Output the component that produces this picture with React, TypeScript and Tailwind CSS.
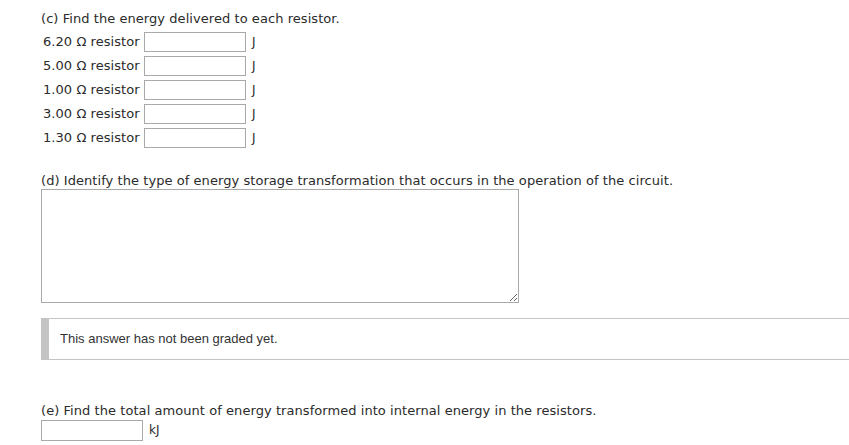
import React from "react";

const font = { fontFamily: '"DejaVu Sans", Verdana, sans-serif', letterSpacing: "0.06px" };

const rows = ["6.20", "5.00", "1.00", "3.00", "1.30"];

export default function App() {
  return (
    <div className="w-[849px] h-[445px] bg-white text-[#2b2b2b] text-[13px] overflow-hidden relative" style={font}>
      <div className="pl-[41px] pt-[9px]">
        <div className="h-[20px] leading-[20px]">(c) Find the energy delivered to each resistor.</div>
        <div className="flex flex-col pt-[1px]">
          {rows.map((r) => (
            <div key={r} className="flex items-center h-[24px]">
              <span className="w-[103px] pl-[2px] whitespace-nowrap">{r} Ω resistor</span>
              <div className="w-[102px] h-[20px] border border-[#a9a9a9] bg-white" />
              <span className="ml-[6px] text-[12px]">J</span>
            </div>
          ))}
        </div>
        <div className="h-[20px] leading-[24px] mt-[19px] whitespace-nowrap">
          (d) Identify the type of energy storage transformation that occurs in the operation of the circuit.
        </div>
        <textarea
          className="block w-[478px] h-[114px] border border-[#a9a9a9] resize-y bg-white outline-none"
          readOnly
        />
        <div className="mt-[15px] flex h-[42px] border-y border-[#c4c4c4] bg-white">
          <div className="w-[8px] bg-[#c4c4c4]" />
          <div
            className="flex items-center pl-[11px] text-[13px] text-[#333]"
            style={{ fontFamily: '"Liberation Sans", Arial, sans-serif', letterSpacing: "0px" }}
          >
            This answer has not been graded yet.
          </div>
        </div>
        <div className="h-[19px] leading-[22px] mt-[40px] whitespace-nowrap">
          (e) Find the total amount of energy transformed into internal energy in the resistors.
        </div>
        <div className="flex items-center h-[22px]">
          <div className="w-[102px] h-[21px] border border-[#a9a9a9] bg-white" />
          <span className="ml-[6px] text-[12px]">kJ</span>
        </div>
      </div>
    </div>
  );
}
